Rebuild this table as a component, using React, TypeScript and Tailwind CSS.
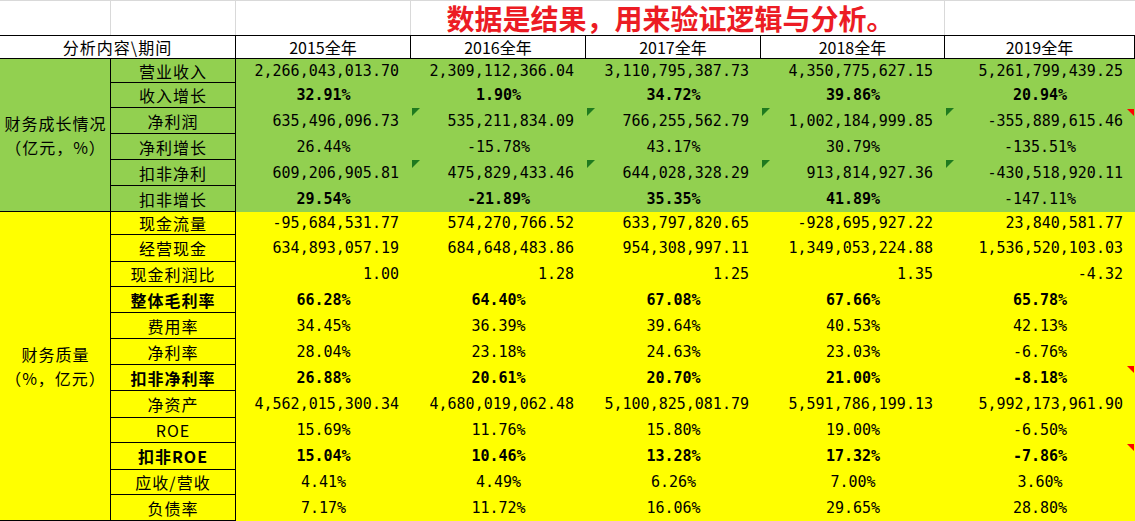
import React from 'react';

type Row = {
  label: string;
  kind: 'num' | 'pct';
  vals: string[];
  bold?: boolean[];
  labelBold?: boolean;
  green?: number[];
  red?: boolean;
  h: string;
};

const B = [true, true, true, true, true];

const growth: Row[] = [
  { label: '营业收入', kind: 'num', h: 'h-[24px]', vals: ['2,266,043,013.70', '2,309,112,366.04', '3,110,795,387.73', '4,350,775,627.15', '5,261,799,439.25'] },
  { label: '收入增长', kind: 'pct', h: 'h-[25px]', bold: B, vals: ['32.91%', '1.90%', '34.72%', '39.86%', '20.94%'] },
  { label: '净利润', kind: 'num', h: 'h-[26px]', green: [1, 2, 3, 4], red: true, vals: ['635,496,096.73', '535,211,834.09', '766,255,562.79', '1,002,184,999.85', '-355,889,615.46'] },
  { label: '净利增长', kind: 'pct', h: 'h-[26px]', vals: ['26.44%', '-15.78%', '43.17%', '30.79%', '-135.51%'] },
  { label: '扣非净利', kind: 'num', h: 'h-[26px]', green: [1, 2, 3, 4], vals: ['609,206,905.81', '475,829,433.46', '644,028,328.29', '913,814,927.36', '-430,518,920.11'] },
  { label: '扣非增长', kind: 'pct', h: 'h-[26px]', bold: [true, true, true, true, false], vals: ['29.54%', '-21.89%', '35.35%', '41.89%', '-147.11%'] },
];

const quality: Row[] = [
  { label: '现金流量', kind: 'num', h: 'h-[23px]', vals: ['-95,684,531.77', '574,270,766.52', '633,797,820.65', '-928,695,927.22', '23,840,581.77'] },
  { label: '经营现金', kind: 'num', h: 'h-[27px]', vals: ['634,893,057.19', '684,648,483.86', '954,308,997.11', '1,349,053,224.88', '1,536,520,103.03'] },
  { label: '现金利润比', kind: 'num', h: 'h-[25px]', vals: ['1.00', '1.28', '1.25', '1.35', '-4.32'] },
  { label: '整体毛利率', kind: 'pct', h: 'h-[26px]', bold: B, labelBold: true, vals: ['66.28%', '64.40%', '67.08%', '67.66%', '65.78%'] },
  { label: '费用率', kind: 'pct', h: 'h-[26px]', vals: ['34.45%', '36.39%', '39.64%', '40.53%', '42.13%'] },
  { label: '净利率', kind: 'pct', h: 'h-[26px]', vals: ['28.04%', '23.18%', '24.63%', '23.03%', '-6.76%'] },
  { label: '扣非净利率', kind: 'pct', h: 'h-[26px]', bold: B, labelBold: true, red: true, vals: ['26.88%', '20.61%', '20.70%', '21.00%', '-8.18%'] },
  { label: '净资产', kind: 'num', h: 'h-[27px]', vals: ['4,562,015,300.34', '4,680,019,062.48', '5,100,825,081.79', '5,591,786,199.13', '5,992,173,961.90'] },
  { label: 'ROE', kind: 'pct', h: 'h-[25px]', vals: ['15.69%', '11.76%', '15.80%', '19.00%', '-6.50%'] },
  { label: '扣非ROE', kind: 'pct', h: 'h-[27px]', bold: B, labelBold: true, red: true, vals: ['15.04%', '10.46%', '13.28%', '17.32%', '-7.86%'] },
  { label: '应收/营收', kind: 'pct', h: 'h-[25px]', vals: ['4.41%', '4.49%', '6.26%', '7.00%', '3.60%'] },
  { label: '负债率', kind: 'pct', h: 'h-[26px]', vals: ['7.17%', '11.72%', '16.06%', '29.65%', '28.80%'] },
];

const colW = ['w-[175px]', 'w-[175px]', 'w-[175px]', 'w-[184px]', 'w-[190px]'];
const years = ['2015全年', '2016全年', '2017全年', '2018全年', '2019全年'];

const cjk = "font-['Noto_Sans_CJK_SC',sans-serif]";
const mono = "font-['DejaVu_Sans_Mono','Noto_Sans_CJK_SC',monospace]";

const GreenMark = () => (
  <svg className="absolute left-[1px] top-0" width="8" height="8" viewBox="0 0 8 8">
    <polygon points="0,0 8,0 0,8" fill="#1f7a1f" />
  </svg>
);

const RedMark = () => (
  <svg className="absolute right-[1px] top-[1px]" width="7" height="7" viewBox="0 0 7 7">
    <polygon points="0,0 7,0 7,7" fill="#ff0000" />
  </svg>
);

const DataRow = ({ row }: { row: Row }) => (
  <div className={`flex ${row.h}`}>
    <div
      className={`w-[125px] shrink-0 flex items-center justify-center border-r border-b border-black text-[16px] tracking-[1px] ${cjk} ${
        row.labelBold ? 'font-bold' : ''
      }`}
    >
      {row.label}
    </div>
    {row.vals.map((v, i) => (
      <div
        key={i}
        className={`${colW[i]} shrink-0 relative flex items-center text-[15px] ${mono} ${
          row.kind === 'num' ? 'justify-end pr-3' : 'justify-center'
        } ${row.bold && row.bold[i] ? 'font-bold' : ''}`}
      >
        {row.green && row.green.includes(i) && <GreenMark />}
        {row.red && i === 4 && <RedMark />}
        {v}
      </div>
    ))}
  </div>
);

const Section = ({ rows, title, sub, bg }: { rows: Row[]; title: string; sub: string; bg: string }) => (
  <div className={`flex ${bg}`}>
    <div className={`w-[111px] shrink-0 flex flex-col items-center justify-center border-b border-black text-[16px] tracking-[1px] leading-[24px] ${cjk}`}>
      <span>{title}</span>
      <span>{sub}</span>
    </div>
    <div className="flex flex-col border-l border-black -ml-px">
      {rows.map((r) => (
        <DataRow key={r.label} row={r} />
      ))}
    </div>
  </div>
);

export default function App() {
  return (
    <div className="w-[1135px] h-[521px] bg-white text-black overflow-hidden">
      {/* title row */}
      <div className="flex h-[35px] border-t border-[#d9d9d9]">
        <div className="w-[111px] border-r border-[#d9d9d9]" />
        <div className="w-[125px] border-r border-[#d9d9d9]" />
        <div className="w-[175px] border-r border-[#d9d9d9]" />
        <div className={`w-[534px] border-r border-[#d9d9d9] flex items-center justify-center pr-[14px] text-[28px] font-bold text-[#ec1c24] leading-[30px] ${cjk}`}>
          数据是结果，用来验证逻辑与分析。
        </div>
        <div className="flex-1" />
      </div>

      {/* header row */}
      <div className={`flex h-[24px] border-t border-b border-black text-[16px] ${cjk}`}>
        <div className="w-[236px] shrink-0 flex items-center justify-center border-r border-black tracking-[1px]">
          分析内容\期间
        </div>
        {years.map((y, i) => (
          <div key={y} className={`${colW[i]} shrink-0 flex items-center justify-center border-r border-black`}>
            {y}
          </div>
        ))}
      </div>

      <Section rows={growth} title="财务成长情况" sub="（亿元，%）" bg="bg-[#92d050]" />
      <Section rows={quality} title="财务质量" sub="（%，亿元）" bg="bg-[#ffff00]" />
    </div>
  );
}
